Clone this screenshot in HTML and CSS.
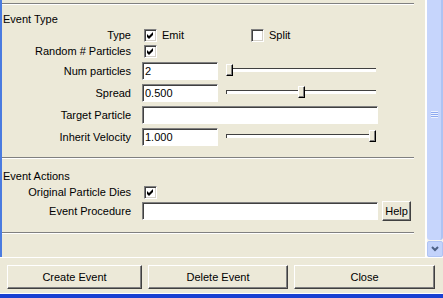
FILE: index.html
```html
<!DOCTYPE html>
<html lang="en">
<head>
<meta charset="UTF-8">
<title>Event Editor</title>
<link rel="stylesheet" href="styles.css">
</head>
<body>
<div class="scroll-area">
    <div class="content">
        <div class="sep sep-top"></div>

        <!-- Event type section -->
        <div class="section-title">Event Type</div>
        <div class="row">
            <span class="label">Type</span>
            <div class="controls">
                <span class="check-item emit">
                    <span class="box"><svg width="7" height="7" viewBox="0 0 7 7"><path d="M0 2L2 4L6 0L6 3L2 7L0 5Z" fill="#000"/></svg></span>Emit
                </span>
                <span class="check-item">
                    <span class="box"></span>Split
                </span>
            </div>
        </div>
        <div class="row">
            <span class="label">Random # Particles</span>
            <div class="controls">
                <span class="box"><svg width="7" height="7" viewBox="0 0 7 7"><path d="M0 2L2 4L6 0L6 3L2 7L0 5Z" fill="#000"/></svg></span>
            </div>
        </div>
        <div class="row field-row first-field">
            <span class="label">Num particles</span>
            <div class="controls">
                <input class="field num" type="text" value="2">
                <div class="slider"><div class="groove"></div><div class="thumb" style="left: 0px;"></div></div>
            </div>
        </div>
        <div class="row field-row">
            <span class="label">Spread</span>
            <div class="controls">
                <input class="field num" type="text" value="0.500">
                <div class="slider"><div class="groove"></div><div class="thumb" style="left: 72px;"></div></div>
            </div>
        </div>
        <div class="row field-row">
            <span class="label">Target Particle</span>
            <div class="controls">
                <input class="field wide" type="text" value="">
            </div>
        </div>
        <div class="row field-row">
            <span class="label">Inherit Velocity</span>
            <div class="controls">
                <input class="field num" type="text" value="1.000">
                <div class="slider"><div class="groove"></div><div class="thumb" style="left: 143px;"></div></div>
            </div>
        </div>

        <div class="sep"></div>

        <!-- Event actions section -->
        <div class="section-title">Event Actions</div>
        <div class="row">
            <span class="label">Original Particle Dies</span>
            <div class="controls">
                <span class="box"><svg width="7" height="7" viewBox="0 0 7 7"><path d="M0 2L2 4L6 0L6 3L2 7L0 5Z" fill="#000"/></svg></span>
            </div>
        </div>
        <div class="row field-row">
            <span class="label">Event Procedure</span>
            <div class="controls">
                <input class="field wide" type="text" value="">
                <button class="btn help">Help</button>
            </div>
        </div>

        <div class="sep sep-end"></div>
    </div>

    <!-- Vertical scrollbar -->
    <div class="scrollbar">
        <div class="sb-thumb"><div class="grip"></div></div>
        <div class="sb-arrow">
            <svg width="8" height="6" viewBox="0 0 8 6"><path d="M1 1L4 4L7 1" fill="none" stroke="#4d6185" stroke-width="2"/></svg>
        </div>
    </div>
</div>

<div class="button-bar">
    <button class="btn">Create Event</button>
    <button class="btn">Delete Event</button>
    <button class="btn">Close</button>
</div>
<div class="frame-bottom"></div>
</body>
</html>
```

FILE: styles.css
```css
/* Page */
body {
    margin: 0;
    width: 443px;
    height: 298px;
    overflow: hidden;
    background-color: #ece9d8;
    color: #000;
    font-family: "Liberation Sans", Arial, sans-serif;
    font-size: 11px;
}
/* Scrolling part of the window */
.scroll-area {
    display: flex;
    height: 258px;
    box-sizing: border-box;
    border-bottom: 1px solid #fff;
}
.content {
    flex: 1;
    border-left: 2px solid #4a7be0;
    padding-right: 11px;
}
/* Etched separators */
.sep {
    border-top: 1px solid #808080;
    border-bottom: 1px solid #fff;
    margin: 9px 0;
}
.sep-top {
    margin: 3px 0 6px;
}
.sep-end {
    margin-top: 10px;
}
.section-title {
    height: 16px;
    line-height: 16px;
    padding-left: 1px;
}
/* Label / control rows */
.row {
    display: grid;
    grid-template-columns: 129px 1fr;
    column-gap: 11px;
    align-items: center;
    height: 16px;
}
.field-row {
    height: 22px;
}
.first-field {
    margin-top: 1px;
}
.label {
    text-align: right;
    white-space: nowrap;
}
.controls {
    display: flex;
    align-items: center;
}
/* Check boxes */
.check-item {
    display: flex;
    align-items: center;
    gap: 5px;
}
.emit {
    width: 109px;
}
.box {
    width: 13px;
    height: 13px;
    box-sizing: border-box;
    margin-left: 2px;
    background-color: #fff;
    border-top: 1px solid #808080;
    border-left: 1px solid #808080;
    border-right: 1px solid #fff;
    border-bottom: 1px solid #fff;
    box-shadow: inset 1px 1px #404040, inset -1px -1px #d4d0c8;
    display: flex;
    align-items: center;
    justify-content: center;
}
.check-item .box {
    margin-left: 2px;
}
.check-item + .check-item .box {
    margin-left: 0;
}
/* Text fields */
.field {
    height: 18px;
    box-sizing: border-box;
    margin: 0;
    padding: 0 2px;
    font: inherit;
    color: #000;
    background-color: #fff;
    border-top: 1px solid #808080;
    border-left: 1px solid #808080;
    border-right: 1px solid #fff;
    border-bottom: 1px solid #fff;
    box-shadow: inset 1px 1px #404040;
    outline: none;
}
.num {
    width: 76px;
}
.wide {
    width: 236px;
}
/* Sliders */
.slider {
    position: relative;
    width: 150px;
    height: 18px;
    margin-left: 8px;
}
.groove {
    margin-top: 6px;
    height: 4px;
    box-sizing: border-box;
    background-color: #fff;
    border-top: 1px solid #404040;
    border-left: 1px solid #404040;
}
.thumb {
    position: absolute;
    top: 2px;
    width: 7px;
    height: 12px;
    box-sizing: border-box;
    background-color: #ece9d8;
    border-top: 1px solid #fff;
    border-left: 1px solid #fff;
    border-right: 1px solid #000;
    border-bottom: 1px solid #000;
    box-shadow: inset -1px -1px #808080;
}
/* Buttons */
.btn {
    margin: 0;
    padding: 0;
    font: inherit;
    color: #000;
    background-color: #ece9d8;
    border-top: 1px solid #fff;
    border-left: 1px solid #fff;
    border-right: 1px solid #404040;
    border-bottom: 1px solid #404040;
    box-shadow: inset -1px -1px #808080;
    height: 24px;
}
.help {
    width: 29px;
    height: 20px;
    margin-left: 4px;
}
/* Scrollbar */
.scrollbar {
    width: 16px;
    border-left: 2px solid #fff;
    display: flex;
    flex-direction: column;
    background-color: #f4f3ee;
}
.sb-thumb {
    flex: 1;
    margin-bottom: 1px;
    background-color: #c6d5fc;
    border-right: 2px solid #aec3f3;
    border-radius: 0 0 3px 3px;
    display: flex;
    justify-content: center;
}
.grip {
    margin-top: 111px;
    width: 7px;
    height: 7px;
    background: repeating-linear-gradient(#eef3fe 0 1px, #8eaaf0 1px 2px);
}
.sb-arrow {
    height: 16px;
    box-sizing: border-box;
    background-color: #c3d3fb;
    border: 1px solid #b0c4f4;
    border-radius: 2px;
    display: flex;
    align-items: center;
    justify-content: center;
}
/* Bottom button row */
.button-bar {
    display: grid;
    grid-template-columns: 135px 140px 141px;
    column-gap: 6px;
    padding: 7px 0 0 7px;
}
.frame-bottom {
    margin-top: 4px;
    height: 4px;
    border-top: 1px solid #fff;
    background-color: #1941d2;
}
```
